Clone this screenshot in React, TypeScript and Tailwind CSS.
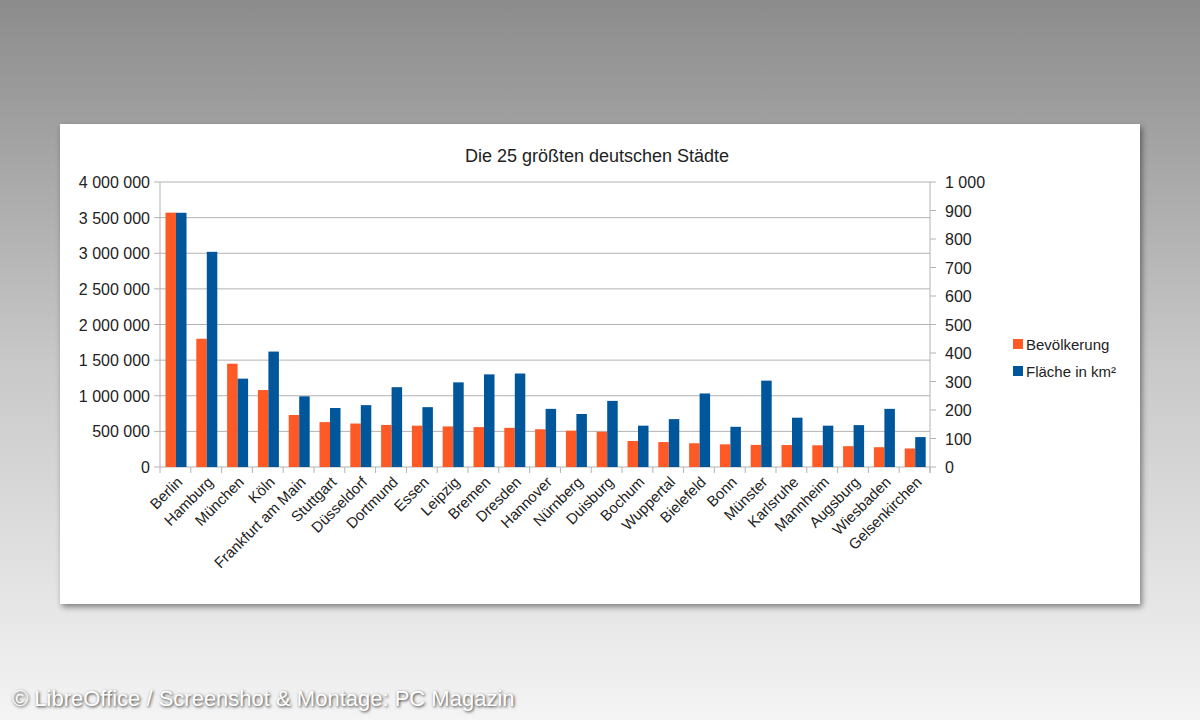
const data: [string, number, number][] = [
  ["Berlin", 3570000, 892], ["Hamburg", 1800000, 755], ["München", 1450000, 310], ["Köln", 1080000, 405],
  ["Frankfurt am Main", 730000, 248], ["Stuttgart", 630000, 207], ["Düsseldorf", 610000, 217], ["Dortmund", 590000, 280],
  ["Essen", 580000, 210], ["Leipzig", 570000, 297], ["Bremen", 560000, 325], ["Dresden", 550000, 328],
  ["Hannover", 530000, 204], ["Nürnberg", 510000, 186], ["Duisburg", 495000, 232], ["Bochum", 365000, 145],
  ["Wuppertal", 350000, 168], ["Bielefeld", 333000, 258], ["Bonn", 318000, 141], ["Münster", 310000, 303],
  ["Karlsruhe", 308000, 173], ["Mannheim", 305000, 145], ["Augsburg", 292000, 147], ["Wiesbaden", 278000, 204],
  ["Gelsenkirchen", 260000, 105],
];

export default function App() {
  const L = 100, R = 870, Z = 343, T = 58;
  const H = Z - T;
  const cw = (R - L) / 25;
  const left = ["0", "500 000", "1 000 000", "1 500 000", "2 000 000", "2 500 000", "3 000 000", "3 500 000", "4 000 000"];
  const right = ["0", "100", "200", "300", "400", "500", "600", "700", "800", "900", "1 000"];
  const font = { fontFamily: '"Liberation Sans", Arial, sans-serif' };
  return (
    <div className="w-[1200px] h-[720px] overflow-hidden flex flex-col bg-gradient-to-b from-[#8c8c8c] via-[#c8c8c8] to-[#f4f4f4]" style={font}>
      <div className="pt-[124px] pl-[60px]">
        <div className="w-[1080px] h-[480px] bg-white shadow-[2px_3px_6px_rgba(0,0,0,0.45)]">
          <svg width="1080" height="480" style={font}>
            <text x="537" y="38" textAnchor="middle" fontSize="18" fill="#222">Die 25 größten deutschen Städte</text>
            {Array.from({ length: 11 }).map((_, i) => {
              const y = Z - (H * i) / 10;
              return <g key={"r" + i}>
                <line x1={R} x2={R + 6} y1={y} y2={y} stroke="#b3b3b3" />
                <text x={R + 15} y={y + 6} fontSize="16" fill="#222">{right[i]}</text>
              </g>;
            })}
            {left.map((t, i) => {
              const y = Z - (H * i) / 8;
              return <g key={"l" + i}>
                <line x1={L - 6} x2={R} y1={y} y2={y} stroke="#b3b3b3" />
                <text x={L - 10} y={y + 6} fontSize="16" fill="#222" textAnchor="end">{t}</text>
              </g>;
            })}
            <line x1={L} x2={L} y1={T} y2={Z + 6} stroke="#b3b3b3" />
            <line x1={R} x2={R} y1={T} y2={Z + 6} stroke="#b3b3b3" />
            {data.map(([n, p, a], i) => {
              const x0 = L + i * cw;
              const ph = (p / 4000000) * H, ah = (a / 1000) * H;
              const cx = x0 + cw / 2;
              return <g key={n}>
                <line x1={x0 + cw} x2={x0 + cw} y1={Z} y2={Z + 6} stroke="#b3b3b3" />
                <rect x={x0 + 5.5} y={Z - ph} width={10.5} height={ph} fill="#ff5a26" />
                <rect x={x0 + 16} y={Z - ah} width={10.5} height={ah} fill="#00569b" />
                <text x={cx + 8} y={Z + 16} fontSize="15" fill="#222" textAnchor="end" transform={`rotate(-45 ${cx + 8} ${Z + 16})`}>{n}</text>
              </g>;
            })}
            <rect x="953" y="215" width="10" height="10" fill="#ff5a26" />
            <text x="966" y="226" fontSize="15" fill="#222">Bevölkerung</text>
            <rect x="953" y="242" width="10" height="10" fill="#00569b" />
            <text x="966" y="253" fontSize="15" fill="#222">Fläche in km²</text>
          </svg>
        </div>
      </div>
      <div className="mt-[78px] pl-[12px] text-[22px] text-white [text-shadow:1px_1px_3px_rgba(0,0,0,0.8)]">© LibreOffice / Screenshot &amp; Montage: PC Magazin</div>
    </div>
  );
}
